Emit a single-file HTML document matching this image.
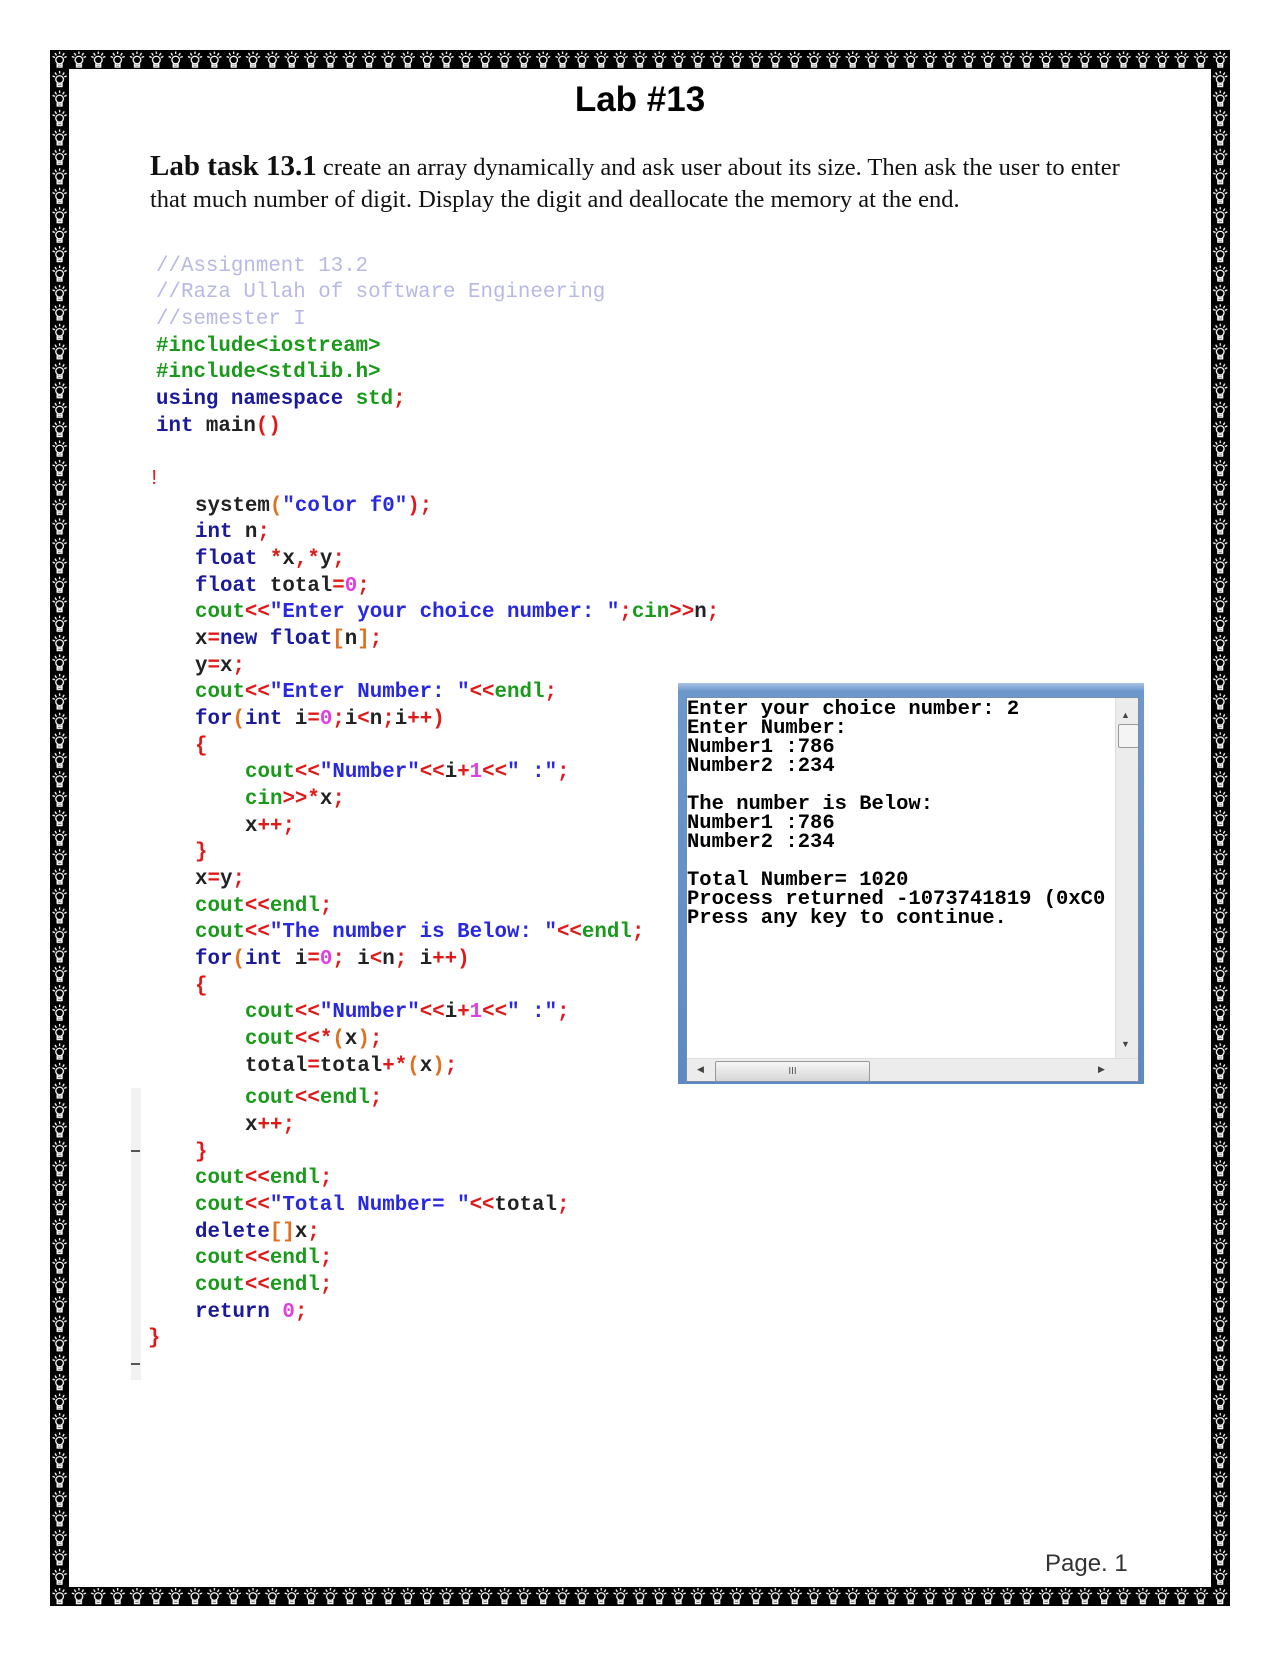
<!DOCTYPE html>
<html><head><meta charset="utf-8"><style>
html,body{margin:0;padding:0;background:#fff;width:1280px;height:1656px;overflow:hidden;position:relative}
.c{position:absolute;font-family:"Liberation Mono",monospace;font-size:20.8px;white-space:pre;line-height:22px;font-weight:bold;color:#222}
.k{color:#1a1a9a}.g{color:#1a9a1a}.s{color:#2828e0}.r{color:#e01818}.p{color:#e040e0}.cm{color:#b8b8e8;font-weight:normal}.o{color:#e07020}
.con{position:absolute;font-family:"Liberation Mono",monospace;font-weight:bold;font-size:20.5px;line-height:19px;white-space:pre;color:#000}
</style></head><body>
<svg width="1280" height="1656" style="position:absolute;left:0;top:0">
<defs><pattern id="b" x="50" y="50" width="19.344" height="19.45" patternUnits="userSpaceOnUse">
<rect width="19.4" height="19.5" fill="#000"/>
<g stroke="#fff" stroke-width="1.3" fill="none">
<path d="M9.6 1.5v2.5M5 3l1.5 2.5M14.2 3l-1.5 2.5M2.5 6.5l2.5 1M16.7 6.5l-2.5 1"/>
<circle cx="9.6" cy="10" r="3.8"/>
<path d="M7.2 13.5v3.5h4.8v-3.5M7.2 15.2h4.8"/>
</g></pattern></defs>
<path d="M50 50H1230V1606H50Z M69 69V1587H1211V69Z" fill="url(#b)" fill-rule="evenodd"/>
</svg>
<div style="position:absolute;left:0;width:1280px;top:80px;text-align:center;font-family:'Liberation Sans',sans-serif;font-weight:bold;font-size:35px">Lab #13</div>
<div style="position:absolute;left:150px;top:150px;width:1100px;font-family:'Liberation Serif',serif;font-size:24.5px;line-height:32px;color:#111"><b style="font-size:29px">Lab task 13.1</b> create an array dynamically and ask user about its size. Then ask the user to enter<br>that much number of digit. Display the digit and deallocate the memory at the end.</div>

<div style="position:absolute;left:131px;top:1088px;width:10px;height:292px;background:#f2f2f2"></div>
<div style="position:absolute;left:131px;top:1150px;width:9px;height:2px;background:#555"></div>
<div style="position:absolute;left:131px;top:1363px;width:9px;height:2px;background:#555"></div>

<div class="c cm" style="left:156px;top:256px">//Assignment 13.2</div>
<div class="c cm" style="left:156px;top:282px">//Raza Ullah of software Engineering</div>
<div class="c cm" style="left:156px;top:309px">//semester I</div>
<div class="c g" style="left:156px;top:336px">#include&lt;iostream&gt;</div>
<div class="c g" style="left:156px;top:362px">#include&lt;stdlib.h&gt;</div>
<div class="c" style="left:156px;top:389px"><span class="k">using namespace</span> <span class="g">std</span><span class="r">;</span></div>
<div class="c" style="left:156px;top:416px"><span class="k">int</span> main<span class="r">()</span></div>
<div class="c r" style="left:148px;top:469px;font-weight:normal">!</div>

<div class="c" style="left:195px;top:496px">system<span class="o">(</span><span class="s">"color f0"</span><span class="r">);</span></div>
<div class="c" style="left:195px;top:522px"><span class="k">int</span> n<span class="r">;</span></div>
<div class="c" style="left:195px;top:549px"><span class="k">float</span> <span class="r">*</span>x<span class="r">,*</span>y<span class="r">;</span></div>
<div class="c" style="left:195px;top:576px"><span class="k">float</span> total<span class="r">=</span><span class="p">0</span><span class="r">;</span></div>
<div class="c" style="left:195px;top:602px"><span class="g">cout</span><span class="r">&lt;&lt;</span><span class="s">"Enter your choice number: "</span><span class="r">;</span><span class="g">cin</span><span class="r">&gt;&gt;</span>n<span class="r">;</span></div>
<div class="c" style="left:195px;top:629px">x<span class="r">=</span><span class="k">new float</span><span class="o">[</span>n<span class="o">]</span><span class="r">;</span></div>
<div class="c" style="left:195px;top:656px">y<span class="r">=</span>x<span class="r">;</span></div>
<div class="c" style="left:195px;top:682px"><span class="g">cout</span><span class="r">&lt;&lt;</span><span class="s">"Enter Number: "</span><span class="r">&lt;&lt;</span><span class="g">endl</span><span class="r">;</span></div>
<div class="c" style="left:195px;top:709px"><span class="k">for</span><span class="o">(</span><span class="k">int</span> i<span class="r">=</span><span class="p">0</span><span class="r">;</span>i<span class="r">&lt;</span>n<span class="r">;</span>i<span class="r">++)</span></div>
<div class="c r" style="left:195px;top:736px">{</div>
<div class="c" style="left:245px;top:762px"><span class="g">cout</span><span class="r">&lt;&lt;</span><span class="s">"Number"</span><span class="r">&lt;&lt;</span>i<span class="r">+</span><span class="p">1</span><span class="r">&lt;&lt;</span><span class="s">" :"</span><span class="r">;</span></div>
<div class="c" style="left:245px;top:789px"><span class="g">cin</span><span class="r">&gt;&gt;*</span>x<span class="r">;</span></div>
<div class="c" style="left:245px;top:816px">x<span class="r">++;</span></div>
<div class="c r" style="left:195px;top:842px">}</div>
<div class="c" style="left:195px;top:869px">x<span class="r">=</span>y<span class="r">;</span></div>
<div class="c" style="left:195px;top:896px"><span class="g">cout</span><span class="r">&lt;&lt;</span><span class="g">endl</span><span class="r">;</span></div>
<div class="c" style="left:195px;top:922px"><span class="g">cout</span><span class="r">&lt;&lt;</span><span class="s">"The number is Below: "</span><span class="r">&lt;&lt;</span><span class="g">endl</span><span class="r">;</span></div>
<div class="c" style="left:195px;top:949px"><span class="k">for</span><span class="o">(</span><span class="k">int</span> i<span class="r">=</span><span class="p">0</span><span class="r">;</span> i<span class="r">&lt;</span>n<span class="r">;</span> i<span class="r">++)</span></div>
<div class="c r" style="left:195px;top:976px">{</div>
<div class="c" style="left:245px;top:1002px"><span class="g">cout</span><span class="r">&lt;&lt;</span><span class="s">"Number"</span><span class="r">&lt;&lt;</span>i<span class="r">+</span><span class="p">1</span><span class="r">&lt;&lt;</span><span class="s">" :"</span><span class="r">;</span></div>
<div class="c" style="left:245px;top:1029px"><span class="g">cout</span><span class="r">&lt;&lt;*</span><span class="o">(</span>x<span class="o">)</span><span class="r">;</span></div>
<div class="c" style="left:245px;top:1056px">total<span class="r">=</span>total<span class="r">+*</span><span class="o">(</span>x<span class="o">)</span><span class="r">;</span></div>
<div class="c" style="left:245px;top:1088px"><span class="g">cout</span><span class="r">&lt;&lt;</span><span class="g">endl</span><span class="r">;</span></div>
<div class="c" style="left:245px;top:1115px">x<span class="r">++;</span></div>
<div class="c r" style="left:195px;top:1142px">}</div>
<div class="c" style="left:195px;top:1168px"><span class="g">cout</span><span class="r">&lt;&lt;</span><span class="g">endl</span><span class="r">;</span></div>
<div class="c" style="left:195px;top:1195px"><span class="g">cout</span><span class="r">&lt;&lt;</span><span class="s">"Total Number= "</span><span class="r">&lt;&lt;</span>total<span class="r">;</span></div>
<div class="c" style="left:195px;top:1222px"><span class="k">delete</span><span class="o">[]</span>x<span class="r">;</span></div>
<div class="c" style="left:195px;top:1248px"><span class="g">cout</span><span class="r">&lt;&lt;</span><span class="g">endl</span><span class="r">;</span></div>
<div class="c" style="left:195px;top:1275px"><span class="g">cout</span><span class="r">&lt;&lt;</span><span class="g">endl</span><span class="r">;</span></div>
<div class="c" style="left:195px;top:1302px"><span class="k">return</span> <span class="p">0</span><span class="r">;</span></div>
<div class="c r" style="left:148px;top:1328px">}</div>

<!-- console -->
<div style="position:absolute;left:678px;top:683px;width:466px;height:401px;background:linear-gradient(#a9c4e4,#6c98cc 8px,#5d8ac4)"></div>
<div style="position:absolute;left:686px;top:697px;width:453px;height:385px;background:#fff;border:1px solid #7a8ea8;box-sizing:border-box;overflow:hidden">
<div class="con" style="left:0;top:2px">Enter your choice number: 2
Enter Number:
Number1 :786
Number2 :234

The number is Below:
Number1 :786
Number2 :234

Total Number= 1020
Process returned -1073741819 (0xC0
Press any key to continue.</div>
<div style="position:absolute;left:428px;top:0;width:24px;height:360px;background:#ececec;border-left:1px solid #ddd"></div>
<div style="position:absolute;left:431px;top:26px;width:19px;height:22px;background:#f4f4f4;border:1px solid #999;border-radius:2px"></div>
<div style="position:absolute;left:434px;top:12px;font-size:9px;color:#444;font-family:'Liberation Sans',sans-serif">▲</div>
<div style="position:absolute;left:434px;top:341px;font-size:9px;color:#444;font-family:'Liberation Sans',sans-serif">▼</div>
<div style="position:absolute;left:0;top:360px;width:452px;height:24px;background:#ececec;border-top:1px solid #ddd"></div>
<div style="position:absolute;left:28px;top:363px;width:153px;height:19px;background:linear-gradient(#f6f6f6,#d6d6d6);border:1px solid #999;border-radius:2px;text-align:center;font-size:10px;line-height:19px;color:#555;font-family:'Liberation Sans',sans-serif">III</div>
<div style="position:absolute;left:10px;top:366px;font-size:9px;color:#444;font-family:'Liberation Sans',sans-serif">◀</div>
<div style="position:absolute;left:411px;top:366px;font-size:9px;color:#444;font-family:'Liberation Sans',sans-serif">▶</div>
</div>

<div style="position:absolute;left:1045px;top:1550px;font-family:'Liberation Sans',sans-serif;font-size:24px;color:#333">Page. 1</div>
</body></html>
